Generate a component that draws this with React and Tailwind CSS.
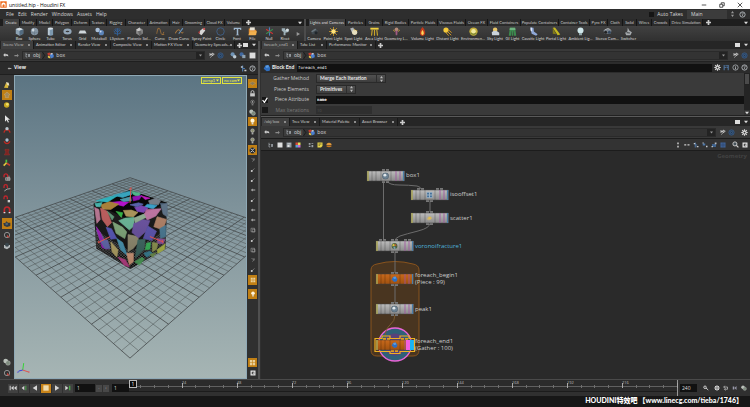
import React from "react";

const leftTabs = [
  ["Create", "w-[17px]"], ["Modify", "w-[17px]"], ["Model", "w-[16px]"], ["Polygon", "w-[19px]"],
  ["Deform", "w-[18px]"], ["Texture", "w-[17px]"], ["Rigging", "w-[19px]"], ["Character", "w-[22px]"],
  ["Animation", "w-[22px]"], ["Hair", "w-[13px]"], ["Grooming", "w-[22px]"], ["Cloud FX", "w-[20px]"], ["Volume", "w-[18px]"],
];
const rightTabs = [
  ["Lights and Cameras", "w-[37px]"], ["Particles", "w-[20px]"], ["Grains", "w-[17px]"], ["Rigid Bodies", "w-[26px]"],
  ["Particle Fluids", "w-[29px]"], ["Viscous Fluids", "w-[28px]"], ["Ocean FX", "w-[22px]"], ["Fluid Containers", "w-[33px]"],
  ["Populate Containers", "w-[38px]"], ["Container Tools", "w-[31px]"], ["Pyro FX", "w-[18px]"], ["Cloth", "w-[15px]"],
  ["Solid", "w-[14px]"], ["Wires", "w-[15px]"], ["Crowds", "w-[18px]"], ["Drive Simulation", "w-[33px]"],
];
const leftTools = [
  ["Box", "w-[16px]", "box"], ["Sphere", "w-[15px]", "sphere"], ["Tube", "w-[17px]", "tube"], ["Torus", "w-[16px]", "torus"],
  ["Grid", "w-[15px]", "plane"], ["Metaball", "w-[18px]", "meta"], ["LSystem", "w-[18px]", "lsys"], ["Platonic Sol...", "w-[26px]", "platonic"],
  ["Curve", "w-[16px]", "curve"], ["Draw Curve", "w-[22px]", "draw"], ["Spray Paint", "w-[23px]", "spray"], ["Circle", "w-[15px]", "circle"],
  ["Font", "w-[18px]", "font"], ["File", "w-[13px]", "file"], ["Null", "w-[20px]", "nul"], ["Rivet", "w-[12px]", "rivet"],
];
const rightTools = [
  ["Camera", "w-[16px]", "camera"], ["Point Light", "w-[22px]", "sun"], ["Spot Light", "w-[19px]", "spot"], ["Area Light", "w-[22px]", "area"],
  ["Geometry L...", "w-[22px]", "geo"], ["Volume Light", "w-[31px]", "volume"], ["Distant Light", "w-[19px]", "distant"],
  ["Environmen...", "w-[32px]", "env"], ["Sky Light", "w-[12px]", "sky"], ["GI Light", "w-[23px]", "gi"], ["Caustic Light", "w-[18px]", "caustic"],
  ["Portal Light", "w-[28px]", "portal"], ["Ambient Lig...", "w-[21px]", "ambient"], ["Stereo Cam...", "w-[32px]", "stereo"], ["Switcher", "w-[11px]", "switcher"],
];

const art = {
  box: <><path d="M2 5l10-3 10 4v12l-10 5L2 18z" fill="#8da3b5" /><path d="M2 5l10-3 10 4-10 4z" fill="#d5dde3" /><path d="M12 10l10-4v12l-10 5z" fill="#536b80" /></>,
  sphere: <><circle cx="12" cy="12" r="10" fill="#8595a3" /><circle cx="9" cy="8" r="4" fill="#cfd8df" /><path d="M3 14q9 5 18 0M12 2v20" stroke="#5a6b7a" fill="none" /></>,
  ballN: <><circle cx="12" cy="12" r="11" fill="#6d8394" stroke="#4f5f6b" strokeWidth="2" /><circle cx="10" cy="9" r="5" fill="#dfe6ea" /></>,
  iso: <><path d="M2 2h20v20H2z" fill="#9eb4c6" /><path d="M4 4h6v6H4zM14 4h6v6h-6zM4 14h6v6H4zM14 14h6v6h-6z" fill="#3e6c96" /></>,
  scat: <><path d="M2 15l6-8 7-1 7 6-7 7-8 1z" fill="#c5b07a" /><path d="M8 10l7-1 3 4-8 2z" fill="#e8c33c" /></>,
  frac: <><circle cx="12" cy="12" r="10" fill="#47603e" /><path d="M4 8l7-5 2 8-7 3z" fill="#d8c046" /><path d="M13 4l7 5-6 4z" fill="#c5582f" /><path d="M8 15l6-1 2 7-6 1z" fill="#7aa0b4" /></>,
  tube: <><path d="M5 4h14v17q-7 4-14 0z" fill="#7d98ae" /><path d="M5 4h5v18l-5-1z" fill="#b9c7d2" /><ellipse cx="12" cy="4" rx="7" ry="3" fill="#d8e0e6" /></>,
  torus: <ellipse cx="12" cy="12" rx="8" ry="5" fill="none" stroke="#93a6b8" strokeWidth="6" />,
  plane: <path d="M5 9h14l4 8H1z" fill="#cfd6da" />,
  meta: <><circle cx="7" cy="8" r="6" fill="#a9bfd8" /><circle cx="17" cy="15" r="7" fill="#5c83b8" /><circle cx="15" cy="12" r="2.500" fill="#c9d9ee" /></>,
  lsys: <path d="M12 23V3M12 14L4 7M12 14l8-7M12 19l-9-3M12 19l9-3M8 10V3M16 10V3M6 15l-4-5M18 15l4-5" stroke="#2f67a8" strokeWidth="2" fill="none" />,
  platonic: <><path d="M12 1l9 6v10l-9 6-9-6V7z" fill="#898989" /><path d="M12 1l4 8-8 2-5-4z" fill="#c9c9c9" /><path d="M8 11l8-2 2 9-6 5z" fill="#666" /></>,
  curve: <path d="M2 18C5-2 10 1 12 11s5 14 9 2M3 6l4-2M17 20h5" stroke="#b0793a" strokeWidth="2" fill="none" />,
  draw: <><path d="M1 17C6 5 11 6 14 11s5 7 9 2" stroke="#c08540" strokeWidth="2.500" fill="none" /><path d="M10 18L21 3" stroke="#6793bb" strokeWidth="3" /></>,
  spray: <><path d="M8 10l8-7 6 6-10 13-6-4z" fill="#d6d6d6" /><path d="M8 10l-5 4 3 5z" fill="#b33" /><circle cx="19" cy="5" r="3" fill="#c55" /></>,
  circle: <circle cx="12" cy="12" r="10" fill="none" stroke="#3f5f86" strokeWidth="2.500" />,
  font: <path d="M2 2h20v6h-2l-2-3h-4v15l3 2H7l3-2V5H6L4 8H2z" fill="#9fb8d0" />,
  file: <><path d="M2 4h9l2 3h9v14H2z" fill="#e28a2a" /><path d="M5 1h13v8H5z" fill="#e9e4d8" /><path d="M5 11h19l-4 11H1z" fill="#f2b04f" /></>,
  nul: <><path d="M12 1v22" stroke="#4c7fc0" strokeWidth="3" /><path d="M3 6l18 12" stroke="#c33" strokeWidth="3" /><path d="M21 6L3 18" stroke="#3a8a50" strokeWidth="3" /></>,
  rivet: <><path d="M2 3h9v5l9-3v8l-8 2v7H7v-9l-5-3z" fill="#9db0b8" /><circle cx="17" cy="8" r="4" fill="#d3dcdf" /></>,
  camera: <><path d="M3 11l11-7 8 6-7 9H5z" fill="#414a50" /><path d="M3 11l11-7 3 3-11 7z" fill="#6a767e" /><circle cx="16" cy="15" r="4" fill="#20262b" /></>,
  sun: <><path d="M12 0v24M0 12h24M3 3l18 18M21 3L3 21" stroke="#d9a323" strokeWidth="2" /><circle cx="12" cy="12" r="6" fill="#ffe37a" /></>,
  spot: <><path d="M3 4l8-3 5 9-8 5z" fill="#aeb4b8" /><circle cx="15" cy="14" r="7" fill="#e7dfc0" /><path d="M15 5v4M22 8l-3 3" stroke="#e0b030" strokeWidth="2" /></>,
  area: <><path d="M1 2h22v5H1z" fill="#f0d040" /><path d="M6 7L4 23M18 7l2 16M12 7v16" stroke="#c9a52a" strokeWidth="3" /></>,
  geo: <><circle cx="12" cy="6" r="5" fill="#b58b78" /><path d="M9 10h6l-1 12h-4z" fill="#a05a80" /><path d="M3 8l5 4M21 8l-5 4" stroke="#e3b23a" strokeWidth="2" /></>,
  volume: <><path d="M12 0c8 8 11 22 0 24C1 22 4 9 12 0z" fill="#c33a1b" /><path d="M12 8c4 5 5 12 0 13-5-1-4-8 0-13z" fill="#ffd75a" /></>,
  distant: <><circle cx="8" cy="8" r="7" fill="#f5c93a" /><path d="M12 12l10 10M15 8l8 7M8 15l7 8" stroke="#d99b20" strokeWidth="2.500" /></>,
  env: <><circle cx="12" cy="12" r="11" fill="#c7b13c" /><circle cx="12" cy="11" r="6" fill="#efe9a0" /><path d="M4 16q8 7 16 0" stroke="#7c8a3a" strokeWidth="3" fill="none" /></>,
  sky: <><circle cx="11" cy="7" r="6" fill="#e9c86a" /><path d="M2 14q9-8 20 1v7H3z" fill="#cbd3da" /></>,
  gi: <><path d="M5 2h14l3 21h-6l-1-12h-1v12h-4V11H9L8 23H2z" fill="#3c8a4e" /><path d="M5 2h14l1 6H4z" fill="#6fb27f" /></>,
  caustic: <><path d="M4 1l8 1 1 10 10 7-4 4-12-5z" fill="#8fa8d8" /><path d="M4 1l4 1v10l-4-3z" fill="#dce6f7" /></>,
  portal: <><path d="M2 2l6-1 14 19-7 2z" fill="#c4b820" /><path d="M2 2v16l9 1z" fill="#807a1c" /></>,
  ambient: <><circle cx="12" cy="9" r="8" fill="#cfe6ea" /><path d="M8 16h8v6H8z" fill="#8fa5a8" /></>,
  stereo: <><path d="M1 9l12-5 10 5-3 9H4z" fill="#77808a" /><circle cx="7" cy="14" r="4" fill="#222" /><circle cx="17" cy="14" r="4" fill="#32475e" /><path d="M4 8l9-4 7 3" stroke="#ccc" strokeWidth="2" fill="none" /></>,
  switcher: <><path d="M10 1l4 8 7 5-4 8H6l-3-7 6-3z" fill="#a9adb0" /><path d="M7 15l9 1" stroke="#4b4f52" strokeWidth="3" /></>,
  lockY: <><path d="M3 20l6-14 8 3-2 12z" fill="#d8b63a" /><path d="M9 3l8 2 2 9-7-3z" fill="#e9e0bd" /></>,
  view: <path d="M12 3l9 8-4 2v7H7v-7l-4-2z" fill="#a58a5c" stroke="#ddc08a" />,
  gem: <><circle cx="11" cy="12" r="8" fill="#c9a921" /><circle cx="13" cy="10" r="4" fill="#efe06c" /></>,
  arrow: <path d="M6 1v19l5-5 4 8 3-2-4-7h7z" fill="#e5e5e5" />,
  small: <path d="M3 12l8-6v4h10v4H11v4z" fill="#aaa" />,
  handR: <><path d="M3 20c2-9 5-9 9-9s7 0 9 9" stroke="#bf2a22" strokeWidth="4" fill="none" /><circle cx="12" cy="8" r="5" fill="#b9c5cc" /></>,
  handB: <><path d="M3 13q9 14 18 0" stroke="#bf2a22" strokeWidth="4" fill="none" /><circle cx="12" cy="9" r="5" fill="#a9bdd0" /></>,
  rig: <path d="M6 4h12v5l-3 2 5 10H4l5-10-3-2z" fill="#7c2522" stroke="#b03a34" />,
  axis: <><path d="M10 12V2" stroke="#4ac240" strokeWidth="5" /><path d="M10 12l11 7" stroke="#c93d30" strokeWidth="5" /><path d="M10 12l-8 8" stroke="#e2c93f" strokeWidth="5" /></>,
  magnet: <><path d="M4 21V11a8 8 0 0116 0v10" fill="none" stroke="#c1262c" strokeWidth="5" /><path d="M2 18h5v4H2zM17 18h5v4h-5z" fill="#ddd" /></>,
  magGrid: <><path d="M3 13V8a5 5 0 0111 0v5" fill="none" stroke="#c1262c" strokeWidth="4" /><path d="M8 14h13v8H8zM14 14v8M8 18h13M18 8v14" stroke="#bbb" strokeWidth="2" fill="none" /></>,
  magLine: <><path d="M3 12V7a5 5 0 0110 0v5" fill="none" stroke="#c1262c" strokeWidth="4" /><path d="M4 21q8-8 18-7" stroke="#ddd" strokeWidth="2" fill="none" /></>,
  magPt: <><path d="M3 13V8a5 5 0 0110 0v5" fill="none" stroke="#c1262c" strokeWidth="4" /><path d="M14 15h7v7h-7z" fill="#ccc" /></>,
  cam: <><path d="M1 9h6l3-5 5 4h7v10l-10 3-9-4z" fill="#2e3b45" /><circle cx="11" cy="12" r="4" fill="#53656f" /></>,
  ring: <><circle cx="12" cy="12" r="8" fill="none" stroke="#8d8d8d" strokeWidth="3" /><path d="M13 11l8 10-10-4z" fill="#c04038" /></>,
  cloud: <><path d="M3 9h18v7l-9 6-9-4z" fill="#b3b8ba" /><circle cx="12" cy="8" r="6" fill="#3a464c" /></>,
  flat: <path d="M1 11l11-5 11 5-11 7z" fill="#8c7a55" stroke="#e0b060" />,
  lock: <><path d="M4 11h16v11H4z" fill="#c8c8c8" /><path d="M7 11V7a5 5 0 0110 0v4" fill="none" stroke="#c8c8c8" strokeWidth="3" /></>,
  spark: <><circle cx="12" cy="10" r="6" fill="none" stroke="#999" strokeWidth="2" /><circle cx="12" cy="10" r="2" fill="#ddd" /><path d="M9 17h6v5H9z" fill="#777" /></>,
  balls: <><circle cx="8" cy="9" r="7" fill="#b9c0b9" /><circle cx="15" cy="15" r="7" fill="#7d8a7d" stroke="#ddd" /></>,
  bulb: <><circle cx="12" cy="9" r="7" fill="#fff6dd" /><path d="M9 16h6v6H9z" fill="#ddd" /></>,
  bulbD: <><circle cx="12" cy="9" r="6" fill="#8c8f70" stroke="#ccc" strokeWidth="2" /><path d="M9 16h6v6H9z" fill="#aaa" /></>,
  ballB: <><circle cx="12" cy="12" r="10" fill="#23282c" /><path d="M5 6l7 4 7-5M5 18l7-5 7 6" stroke="#d8d8d8" strokeWidth="3" fill="none" /></>,
  tick: <path d="M6 6l12 5-9 7M16 4v6" stroke="#aaa" strokeWidth="2" fill="none" />,
  dotp: <><path d="M5 18L18 6" stroke="#999" strokeWidth="2.500" /><circle cx="7" cy="16" r="4" fill="#ccc" /></>,
  sheet: <path d="M4 5h14v14H4zM9 9h11v11H9z" stroke="#aaa" strokeWidth="2" fill="none" />,
  hash: <path d="M3 3h8v8H3zM13 3h8v8h-8zM3 13h8v8H3zM13 13h8v8h-8z" fill="#e9d09a" />,
  win: <><path d="M2 2h20v20H2z" fill="#e5e5e5" /><path d="M7 7h10v10H7z" fill="#333" /><path d="M11 10h6v5h-6z" fill="#ddd" /></>,
  tree: <path d="M4 3v17h5M4 10h5M14 8v12M14 12h6M18 8v12" stroke="#aeb4ba" strokeWidth="2.500" fill="none" />,
  pinned: <path d="M4 4v12M4 10h9M12 4l9 5-9 6zM10 17l-4 5" stroke="#ddd" strokeWidth="3" fill="none" />,
  target: <><circle cx="12" cy="12" r="9" fill="#22364f" stroke="#3b5f8a" strokeWidth="3" /><circle cx="12" cy="12" r="4" fill="none" stroke="#5079a8" strokeWidth="2" /></>,
  globes: <><circle cx="9" cy="8" r="7" fill="#6f93b5" /><circle cx="16" cy="16" r="6" fill="#bcc9d2" /></>,
  globes2: <><circle cx="9" cy="8" r="7" fill="#4169a0" /><path d="M11 10h11v11H11z" fill="#8da0b0" /></>,
  white: <path d="M2 2h20v20H2z" fill="#dedede" />,
  help: <><circle cx="12" cy="12" r="9" fill="none" stroke="#b9bec2" strokeWidth="3" /><path d="M9 9q3-4 6 0l-3 4v4" stroke="#b9bec2" strokeWidth="2.500" fill="none" /></>,
  info: <><circle cx="12" cy="12" r="9" fill="none" stroke="#b9bec2" strokeWidth="2.500" /><path d="M12 7v2M12 11v7" stroke="#b9bec2" strokeWidth="3" /></>,
  gear: <><path d="M12 1v22M1 12h22M4 4l16 16M20 4L4 20" stroke="#d5d5d5" strokeWidth="4" /><circle cx="12" cy="12" r="7" fill="#d5d5d5" /><circle cx="12" cy="12" r="3" fill="#333" /></>,
  fig: <path d="M4 3v18M4 12h6M18 3v18M18 12h-6M8 6h8" stroke="#4d6f96" strokeWidth="4" fill="none" />,
  boxes: <><path d="M1 4l8-2 3 3v6l-8 2z" fill="#c33b2e" /><path d="M9 9l10-3 4 4v8l-10 4z" fill="#4a7fd0" /><path d="M3 13l8 2v7l-8-3z" fill="#e3c94b" /><path d="M12 5l6-2 2 4-7 2z" fill="#e8e8e8" /></>,
  hda: <><path d="M2 14l5-9 9-2 6 8-2 9-9 2z" fill="#2f6fc0" /><path d="M7 5l9-2 2 7-8 2z" fill="#5b9be0" /></>,
  pane: <><path d="M2 2h20v20H2z" fill="#8e979e" /><path d="M6 6h12v3H6zM6 12h8v8H6z" fill="#e3e3e3" /></>,
  rgb: <><path d="M2 2h10v10H2z" fill="#d54a3a" /><path d="M12 2h10v10H12z" fill="#e5e05a" /><path d="M2 12h10v10H2z" fill="#58a0d8" /><path d="M12 12h10v10H12z" fill="#c86bd0" /></>,
  note: <><path d="M2 2h20v14l-6 6H2z" fill="#e8d44a" /><path d="M6 8h12M6 13h6" stroke="#5a5020" strokeWidth="3" /></>,
  burger: <><path d="M2 8q10-10 20 0v4H2z" fill="#e39a3a" /><path d="M2 14h20v4q-10 5-20 0z" fill="#c97a20" /></>,
  four: <path d="M3 4h7v7H3zM14 4h7v3h-7zM14 12h7v9h-7zM3 15h7v5H3z" fill="#9aa0a5" />,
  vd: <path d="M9 2h6v7H9zM9 15h6v7H9z" fill="#ccc" />,
  hd: <path d="M1 9h8v5H1zM14 9h8v5h-8z" fill="#ccc" />,
  net1: <><path d="M9 2v20M9 12h8" stroke="#4d77a8" strokeWidth="4" fill="none" /><path d="M3 4h6v5H3zM15 16h7v5h-7z" fill="#c5ccd2" /></>,
  net2: <><path d="M3 6h10v8H3z" fill="#4d77a8" /><path d="M2 2h5v4H2zM16 15h6v6h-6z" fill="#c5ccd2" /></>,
  net3: <><path d="M4 8h16v12H4z" fill="#3f628c" /><path d="M15 2h7v7h-7zM2 16h6v5H2z" fill="#b5bcc2" /></>,
  blueGrid: <><path d="M2 2h20v20H2z" fill="#4469a0" /><path d="M2 9h20M2 15h20M9 2v20M15 2v20" stroke="#263b5a" strokeWidth="1.500" /></>,
  mag: <><circle cx="10" cy="10" r="7" fill="#46525a" stroke="#d8d8d8" strokeWidth="3" /><path d="M15 15l7 7" stroke="#d8d8d8" strokeWidth="4" /></>,
  back: <path d="M1 12l8-8v5h8q5 2 4 9-3-4-12-3v5z" fill="#cfcfcf" />,
  fwd: <path d="M23 12l-8-8v5H2v6h13v5z" fill="#8b8b8b" />,
  first: <path d="M2 5h3v14H2zM14 5v14l-8-7zM23 5v14l-8-7z" fill="#d5d5d5" />,
  prevK: <><path d="M13 5v14l-8-7z" fill="#d5d5d5" /><path d="M16 5h3v14h-3z" fill="#49a64a" /></>,
  playB: <path d="M18 4v16L5 12z" fill="#d5d5d5" />,
  stop: <path d="M4 4h16v16H4z" fill="#f0dcae" />,
  play: <path d="M6 4v16l13-8z" fill="#d5d5d5" />,
  last: <><path d="M4 5v14l9-7z" fill="#d5d5d5" /><path d="M15 5h4v14h-4z" fill="#49a64a" /></>,
  key: <><circle cx="8" cy="9" r="5" fill="none" stroke="#ccc" strokeWidth="4" /><path d="M12 12l9 8" stroke="#ccc" strokeWidth="4" /></>,
  loop: <path d="M3 8h15v9H6M7 3L3 8l4 5M10 13l-4 4 4 5" stroke="#bbb" strokeWidth="3" fill="none" />,
  speaker: <><path d="M3 6h6v12H3zM10 12l8-8v16z" fill="#99a" /></>,
  houdini: <><path d="M1 1h22v22H1z" fill="#ee6a1c" /><path d="M5 20V9q7-7 14 0v11h-4q3-9-3-9-5 0-3 9z" fill="#fff" /></>,
};

function Glyph({ n, s = "size-[8px]" }) {
  return <svg viewBox="0 0 24 24" aria-hidden="true" className={`${s} block shrink-0`}>{art[n]}</svg>;
}
function IconBtn({ n, label, w = "w-[9px]", on = false, h = "h-[9px]", s }) {
  return (
    <button aria-label={label || n} className={`${w} ${h} flex shrink-0 items-center justify-center ${on ? "bg-[#c07f14]" : ""}`}>
      <Glyph n={n} s={s} />
    </button>
  );
}
const Down = () => <svg viewBox="0 0 6 6" className="block size-[4px] shrink-0" aria-hidden="true"><path d="M0 1h6L3 5z" fill="#ddd" /></svg>;
const Plus = () => <svg viewBox="0 0 6 6" className="block size-[5px] shrink-0" aria-hidden="true"><path d="M2 0h2v2h2v2H4v2H2V4H0V2h2z" fill="#ccc" /></svg>;

function Shelf({ tabs, tools, className, arrow }) {
  return (
    <section className={`flex flex-col overflow-hidden font-['Lato',sans-serif] ${className}`}>
      <div className="flex h-[7px] items-stretch bg-[#1e1e1e] pl-[3px] pr-[2px]">
        {tabs.map(([t, w], i) => (
          <button key={t} className={`${w} flex shrink-0 items-center justify-center whitespace-nowrap border-r border-[#151515] text-[4px] leading-[6px] ${i === 0 ? "bg-[#414141] text-[#ddd]" : "bg-[#2b2b2b] text-[#c8c8c8]"}`}>{t}</button>
        ))}
        <button aria-label="Add shelf" className="flex w-[10px] items-center justify-center"><Plus /></button>
        <button aria-label="Shelf menu" className="ml-auto flex w-[5px] items-center justify-center"><Down /></button>
      </div>
      <div className={`flex flex-1 bg-linear-to-b from-[#414141] to-[#303030] ${arrow ? "pl-[11px]" : ""}`}>
        {tools.map(([t, w, n]) => (
          <button key={t} className={`${w} flex shrink-0 flex-col items-center whitespace-nowrap pt-px text-[4px] leading-[5px] text-[#d8d8d8]`}>
            <Glyph n={n} s="size-[9px]" />{t}
          </button>
        ))}
        {arrow && <button aria-label="More tools" className="flex w-[14px] items-center justify-center"><svg viewBox="0 0 6 6" className="size-[4px]"><path d="M1 0l5 3-5 3z" fill="#999" /></svg></button>}
      </div>
    </section>
  );
}

function PaneTabs({ tabs }) {
  return (
    <div className="flex h-[8px] shrink-0 bg-[#262626] pl-px font-['Lato',sans-serif]">
      {tabs.map(([t, w], i) => (
        <button key={t} className={`${w} flex shrink-0 items-center justify-between whitespace-nowrap border-r border-[#191919] pl-[2px] pr-[3px] text-[4px] leading-[6px] ${i === 0 ? "bg-[#404040] text-[#b8b8b8]" : "bg-[#2a2a2a] text-[#d2d2d2]"}`}>
          {t}<span className="size-[2px] shrink-0 bg-[#8c8c8c]" />
        </button>
      ))}
      <button aria-label="New tab" className="flex w-[9px] items-center justify-center"><Plus /></button>
      <div className="ml-auto flex items-center gap-[4px] pr-[2px]">
        <button aria-label="Maximize pane" className="h-[4px] w-[5px] bg-[#ddd]" />
        <button aria-label="Pane menu" className="flex"><Down /></button>
      </div>
    </div>
  );
}

function PathBar({ children }) {
  return (
    <div className="flex h-[12px] shrink-0 items-center bg-[#393939] pl-px text-[5px] leading-[7px] text-[#d8d8d8]">
      <IconBtn n="back" label="Back" w="w-[10px]" s="size-[6px]" />
      <IconBtn n="fwd" label="Forward" w="w-[10px]" s="size-[5px]" />
      <div className="ml-px flex h-[9px] min-w-0 flex-1 items-center border border-[#2a2a2a] bg-[#333]">
        <button className="flex h-full items-center gap-[2px] bg-[#3d3d3d] pl-[2px] pr-[2px]"><Glyph n="tree" s="size-[6px]" />obj</button>
        <svg viewBox="0 0 4 9" className="h-[7px] w-[4px]" aria-hidden="true"><path d="M0 0l3 4.500L0 9" fill="none" stroke="#161616" /></svg>
        <button className="flex items-center gap-[2px] pl-px"><Glyph n="boxes" s="size-[7px]" />box</button>
        <button aria-label="Path history" className="ml-auto flex h-full w-[8px] items-center justify-center bg-[#232323]"><svg viewBox="0 0 6 6" className="size-[3px]"><path d="M0 1h6L3 5z" fill="#999" /></svg></button>
      </div>
      <div className="flex shrink-0 items-center pl-[2px] pr-px">{children}</div>
    </div>
  );
}

const pieces = [
  ["#2fb0ba", "78,92 126,78 142,77 112,96"], ["#38a4bd", "130,75 182,62 186,72 158,82"], ["#4fb58a", "184,62 212,70 206,80 190,73"],
  ["#b012c8", "118,97 150,94 176,96 160,108"], ["#a8803a", "92,104 118,95 146,102 122,118 97,117"], ["#43b0a8", "74,100 96,97 90,110 78,109"],
  ["#4a98a8", "150,88 182,80 184,92 160,94"], ["#8f12b2", "188,80 216,76 208,88 190,92"], ["#c01cc0", "214,77 240,84 226,88"], ["#747c86", "236,92 258,84 272,92 266,104 240,102"],
  ["#3a9fc8", "232,102 262,106 250,116 224,110"], ["#7a45b0", "194,112 214,106 234,114 222,127 202,124"], ["#5862a8", "180,104 206,98 220,102 200,110"],
  ["#a8925a", "160,121 184,120 204,127 190,141 168,138"], ["#35b045", "138,124 158,128 154,142"], ["#b8689a", "230,118 274,116 258,138 232,150 222,134"],
  ["#50667c", "272,99 292,100 292,140 280,132"], ["#b06a88", "73,112 86,118 90,148 80,160"], ["#b55050", "91,114 112,124 124,158 112,170 96,148"],
  ["#54906c", "112,124 132,140 126,150"], ["#5fae8f", "146,152 166,144 192,142 192,168 178,180"], ["#759e70", "128,156 158,172 170,186 164,206 138,190"],
  ["#4a4ab0", "108,172 124,176 140,206 122,208"], ["#6c50a0", "78,180 90,186 104,212 92,216"], ["#9412b2", "78,170 88,184 104,224 114,238 96,234"],
  ["#5a60a8", "90,212 112,210 120,236 104,236"], ["#3f8fae", "140,206 158,218 172,258 152,240"], ["#b0a060", "122,216 144,240 140,262 126,246"],
  ["#8a8468", "174,194 204,200 206,216 190,236 174,246"], ["#5f4598", "192,160 218,148 240,152 228,184 206,204 186,188"], ["#87a588", "192,144 222,132 228,142 196,158"],
  ["#a8765a", "262,140 290,148 280,180 252,170"], ["#5048a8", "234,168 260,184 246,212 220,206"], ["#3d6f8a", "270,176 288,166 288,200 272,206"],
  ["#35605a", "204,210 226,208 222,240 196,264"], ["#2fb050", "230,220 242,218 240,238 226,240"], ["#8a9048", "248,218 264,220 260,238 248,246"],
  ["#a9b53f", "262,240 286,222 284,238 264,250"], ["#844792", "262,206 286,208 280,222 264,220"], ["#d59a7a", "170,250 190,250 190,276 178,286"],
  ["#c0408a", "144,262 166,270 178,292 162,286"], ["#4c9f59", "194,276 216,262 224,268 208,286"], ["#337c92", "222,250 240,244 250,252 230,262"], ["#6c8c48", "240,254 260,248 248,262"],
];

function Viewport() {
  const N = 30, g = 0.775, b = 46.6, a = 262.6;
  const P = (u, v) => {
    const w = 1 + g * (u + v);
    return `${(130 + (a * (u - v)) / w).toFixed(2)} ${((359 + b * (u + v)) / w).toFixed(2)}`;
  };
  const lines = (major) => Array.from({ length: N + 1 }, (_, i) => i).filter((i) => (i % 5 === 0) === major)
    .map((i) => `M${P(i / N, 0)}L${P(i / N, 1)}M${P(0, i / N)}L${P(1, i / N)}`).join("");
  return (
    <div className="relative min-w-0 flex-1 overflow-hidden border border-[#8fa9b6] bg-linear-to-b from-[#5c7583] via-[#84979e] to-[#a6b5b4]">
      <svg viewBox="14 75 233 304" preserveAspectRatio="xMidYMid slice" className="absolute inset-0 h-full w-full" aria-label="Fractured cube on the ground grid">
        <path d={lines(false)} stroke="#4b5152" strokeWidth="0.600" fill="none" opacity="0.850" />
        <path d={lines(true)} stroke="#434748" strokeWidth="0.800" fill="none" />
        <g transform="translate(70 170) scale(.3333)">
          <defs>
            <linearGradient id="shade" x1="0" x2="0" y1="0" y2="1"><stop offset="0" stopColor="#fff" stopOpacity=".08" /><stop offset="1" stopColor="#000" stopOpacity=".2" /></linearGradient>
            <pattern id="mesh" width="9" height="8" patternUnits="userSpaceOnUse"><path d="M0 0l9 8M9 0L0 8" stroke="#8b8b8b" strokeWidth="1.200" /></pattern>
          </defs>
          <path d="M70 100L180 59L292 98L287 236L181 298L78 236Z" fill="#070707" />
          <path d="M76 180L181 245L288 180L287 236L181 298L78 236Z" fill="url(#mesh)" />
          {pieces.map(([c, p]) => <polygon key={p} points={p} fill={c} stroke={c} strokeWidth="2" strokeLinejoin="round" />)}
          <path d="M70 100L180 150L292 98L287 236L181 298L78 236Z" fill="url(#shade)" />
          <path d="M180 98L183 52l-5 6M84 218l36-18M240 200l40 16M84 214l3 6M278 211l2 8" stroke="#e0524c" strokeWidth="3" fill="none" />
        </g>
        <path d="M22 371l1-7" stroke="#35d335" /><path d="M22 371l6 2" stroke="#e05050" /><path d="M22 371l-4 1" stroke="#3b3be0" />
      </svg>
      <div className="absolute right-[4px] top-px flex gap-px">
        {["persp1", "no cam"].map((t) => (
          <button key={t} className="flex h-[7px] w-[20px] items-center justify-between whitespace-nowrap border border-[#e2e23a] px-px font-['Lato',sans-serif] text-[4px] leading-[5px] text-[#f4f43a]">{t}
            <svg viewBox="0 0 6 6" className="size-[3px]" aria-hidden="true"><path d="M0 1h6L3 5z" fill="#f4f43a" /></svg></button>
        ))}
      </div>
      <span className="absolute bottom-[4px] left-[2px] text-[4px] leading-[5px] text-[#3030d8]">z</span>
      <span className="absolute bottom-[4px] left-[13px] text-[4px] leading-[5px] text-[#e05050]">x</span>
    </div>
  );
}

function Spin({ options, w, id }) {
  return (
    <div className={`${w} flex h-[9px] items-center border border-[#2a2a2a] bg-linear-to-b from-[#515151] to-[#3d3d3d]`}>
      <select id={id} className="min-w-0 flex-1 appearance-none bg-transparent pl-[3px] font-['Lato',sans-serif] text-[5px] font-bold leading-[7px] text-[#e6e6e6]">
        {options.map((o) => <option key={o}>{o}</option>)}
      </select>
      <span className="flex h-full w-[9px] items-center justify-center border-l border-[#2d2d2d]">
        <svg viewBox="0 0 4 8" className="h-[6px] w-[3px]" aria-hidden="true"><path d="M0 3l2-3 2 3zM0 5h4L2 8z" fill="#bbb" /></svg>
      </span>
    </div>
  );
}

const labelCls = "whitespace-nowrap text-right text-[5px] leading-[9px]";

function Params() {
  return (
    <div className="flex shrink-0 flex-col bg-[#3a3a3a]">
      <div className="flex h-[11px] items-center bg-[#2c2c2c] pl-[2px] pr-px">
        <Glyph n="hda" s="size-[8px]" />
        <label htmlFor="opname" className="w-[26px] whitespace-nowrap pl-px font-['Lato',sans-serif] text-[5px] font-black text-[#e6e6e6]">Block End</label>
        <input id="opname" defaultValue="foreach_end1" className="h-[8px] min-w-0 flex-1 bg-[#111] px-px font-['DejaVu_Sans_Mono',monospace] text-[4px] leading-[7px] text-[#fff]" />
        <div className="flex pl-px"><IconBtn n="gear" label="Parameter options" s="size-[7px]" /><IconBtn n="fig" label="Figures" s="size-[7px]" /><IconBtn n="info" label="Info" s="size-[7px]" /><IconBtn n="help" label="Help" s="size-[7px]" /></div>
      </div>
      <div className="flex h-[42px]">
        <div className="grid min-w-0 flex-1 grid-cols-[10px_36px_1fr] items-center gap-x-[2px] gap-y-px pt-px">
          <span /><label htmlFor="gm" className={`${labelCls} text-[#cacaca]`}>Gather Method</label>
          <div className="pl-[5px]"><Spin id="gm" w="w-[70px]" options={["Merge Each Iteration", "Feedback Each Iteration"]} /></div>
          <span /><label htmlFor="pe" className={`${labelCls} text-[#cacaca]`}>Piece Elements</label>
          <div className="pl-[5px]"><Spin id="pe" w="w-[40px]" options={["Primitives", "Points"]} /></div>
          <label className="flex pl-px"><input type="checkbox" defaultChecked aria-label="Use piece attribute" className="peer size-[6px] appearance-none bg-[#151515]" />
            <svg viewBox="0 0 10 10" className="pointer-events-none -ml-[6px] size-[6px]" aria-hidden="true"><path d="M1 5l3 4 5-8" fill="none" stroke="#fff" strokeWidth="2" /></svg></label>
          <label htmlFor="pa" className={`${labelCls} text-[#cacaca]`}>Piece Attribute</label>
          <div className="pl-[5px]"><input id="pa" defaultValue="name" className="block h-[8px] w-full bg-[#111] px-px font-['DejaVu_Sans_Mono',monospace] text-[4px] font-bold text-[#fff]" /></div>
          <label className="flex pl-px"><input type="checkbox" aria-label="Use max iterations" className="size-[6px] appearance-none bg-[#181818]" /></label>
          <label htmlFor="mi" className={`${labelCls} text-[#7a7a7a]`}>Max Iterations</label>
          <div className="flex items-center pl-[5px]"><input id="mi" disabled defaultValue="10" className="block h-[8px] w-[56px] bg-[#2f2f2f] px-px text-[4px] text-[#555]" /></div>
        </div>
        <div className="flex w-[6px] flex-col justify-between bg-[#242424]"><span className="h-[12px] border border-[#222] bg-[#4a4a4a]" /><span className="flex h-[5px] items-center justify-center bg-[#333]"><Down /></span></div>
      </div>
    </div>
  );
}

const nodes = [
  { x: 367, y: 171, n: "box1", ins: [18], icon: "ballN", lx: "left-[145px] top-[21px]" },
  { x: 411, y: 190, n: "isooffset1", ins: [9, 28], icon: "iso", lx: "left-[189px] top-[40px]" },
  { x: 411, y: 213, n: "scatter1", ins: [18], icon: "scat", lx: "left-[189px] top-[64px]" },
  { x: 376, y: 241, n: "voronoifracture1", ins: [6, 18, 31], icon: "frac", lx: "left-[154px] top-[92px]", c: "text-[#4fb4dc]" },
  { x: 376, y: 274, n: "foreach_begin1", sub: "(Piece : 99)", ins: [18], icon: "hda", o: true, lx: "left-[154px] top-[121px]" },
  { x: 376, y: 304, n: "peak1", ins: [18], icon: "ballN", lx: "left-[154px] top-[155px]" },
  { x: 376, y: 340, n: "foreach_end1", sub: "(Gather : 100)", ins: [10, 28], icon: "hda", o: true, sel: true, lx: "left-[154px] top-[187px]" },
];

function Network() {
  return (
    <div className="relative min-h-0 flex-1 overflow-hidden bg-[#2a2a2a]">
      <svg width="490" height="240" viewBox="261 151 490 240" className="absolute left-0 top-0" aria-hidden="true">
        <defs><linearGradient id="ng" x1="0" x2="0" y1="0" y2="1"><stop offset="0" stopColor="#bdbdbd" /><stop offset="1" stopColor="#8a8a8a" /></linearGradient>
          <linearGradient id="og" x1="0" x2="0" y1="0" y2="1"><stop offset="0" stopColor="#c9691b" /><stop offset="1" stopColor="#a0510f" /></linearGradient></defs>
        <path d="M371 270q0-5 6-6 18-5 36 0 6 1 6 6v80q0 6-6 6h-36q-6 0-6-6z" fill="#493520" stroke="#8a541d" />
        <circle cx="395" cy="344.500" r="16.500" fill="#2f6078" stroke="#e866d8" strokeWidth="1.300" />
        <circle cx="395" cy="344.500" r="11" fill="#58427a" />
        <g fill="none" stroke="#6c6c6c">
          <path d="M383.500 181V239M387 181q2 4 12 4t18 1q4 1 4 3M430 200v12M430 223q0 5-12 8t-18 5q-5 2-5 5M395 251v22M395 284v19" />
          <path d="M395 315q0 6-5 10t-5 14" stroke="#7b5a30" />
        </g>
        {nodes.map((k) => (
          <g key={k.n} transform={`translate(${k.x} ${k.y})`}>
            {k.ins.map((i) => <path key={i} d={`M${i - 3} -2h3v2h-3zM${i + 1} -2h3v2h-3z`} fill={k.sel ? "#e0a020" : "#777"} />)}
            <path d="M15 10h3v2h-3zM19 10h3v2h-3z" fill={k.sel ? "#e0a020" : "#777"} />
            <rect width="37.500" height="10" fill={k.o ? "url(#og)" : "url(#ng)"} stroke="#454545" strokeWidth=".5" />
            <path d="M1 0v10" stroke="#a9a455" strokeWidth="1.500" />
            <path d="M5 0v10M9 0v10M14 0v10M24 0v10" stroke="#000" strokeOpacity=".22" />
            <path d="M29 0v10M33 0v10" stroke="#a050a0" strokeWidth="1" strokeOpacity=".8" /><path d="M36.500 0v10" stroke="#4b7fa8" strokeWidth="1.200" />
            {k.sel && <><rect x="30" width="4" height="10" fill="#f45fe0" /><rect x="34" width="4.500" height="10" fill="#19b4f4" /><path d="M-1-1.500H6V-4H14V-1.500H24V-4H33V-1.500H38.500V11.500H24V13.500H14V11.500H-1z" fill="none" stroke="#f0b022" strokeWidth="1.200" /></>}
            <svg x="15" y="1.500" width="7" height="7" viewBox="0 0 24 24">{art[k.icon]}</svg>
          </g>
        ))}
      </svg>
      {nodes.map((k) => (
        <div key={k.n} className={`absolute whitespace-nowrap text-[6px] leading-[7px] ${k.lx} ${k.c || "text-[#cdcdcd]"}`}>{k.n}{k.sub && <><br />{k.sub}</>}</div>
      ))}
      <div className="absolute right-[3px] top-px text-[6px] font-bold leading-[8px] text-[#424242]">Geometry</div>
    </div>
  );
}

function Timeline() {
  const pos = (f) => `${((f - 1) / 239) * 100}%`;
  const ticks = Array.from({ length: 40 }, (_, i) => (i + 1) * 6);
  return (
    <div className="relative h-[16px] min-w-0 flex-1 border-r border-[#999] bg-[#303030]">
      <div className="h-[12px] border-b border-[#1c1c1c] bg-[#2b2b2b]" />
      <div className="absolute inset-x-0 top-[6px] h-px bg-[#606060]" />
      {ticks.map((f) => <span key={f} className={`absolute w-px ${f % 24 ? "top-[5px] h-[3px] bg-[#707070]" : "top-[3px] h-[5px] bg-[#aaa]"}`} style={{ left: pos(f) }} />)}
      {[24, 48, 72, 96, 120, 144, 168, 192, 216].map((f) => <span key={f} className="absolute top-0 text-[4px] leading-[5px] text-[#bbb]" style={{ left: pos(f) }}>{f}</span>)}
      <div className="absolute left-0 top-0 flex h-[8px] w-[8px] items-center justify-center border border-[#bbb] bg-[#0c0c0c] text-[5px] leading-[6px] text-white">1</div>
    </div>
  );
}

const Num = ({ v, label, w }) => <input aria-label={label} defaultValue={v} className={`${w} h-[8px] shrink-0 bg-[#111] px-[2px] text-[5px] leading-[8px] text-[#ddd]`} />;

const lt = [["lockY", 10], ["view", 10, 1], ["gem", 10], 4, ["arrow", 11], ["handR", 11], ["handB", 11], ["rig", 11], ["axis", 11], 3, ["magGrid", 11], ["magLine", 11], ["magPt", 11], ["magnet", 11], 3, ["cam", 11, 1], ["ring", 11], ["cloud", 11]];
const rtTop = ["*flat", "lock", "spark", "balls", "*bulb", "bulbD", "bulbD", "*ballB"];
const rt = ["tick", "dotp", "dotp", "small", "dotp", "small", "small", "sheet", "dotp", "sheet", "tick", "dotp", "*hash"];

export default function App() {
  return (
    <div className="flex h-screen min-h-[400px] w-full flex-col overflow-hidden bg-[#1b1b1b] font-['Open_Sans','Noto_Sans_CJK_SC',sans-serif] text-[#bbb]">
      <header className="flex h-[9px] shrink-0 items-center bg-white text-[5px] text-black">
        <Glyph n="houdini" s="size-[7px]" />
        <h1 className="pl-[2px] text-[5px] leading-[8px]">untitled.hip - Houdini FX</h1>
        <div className="ml-auto flex gap-[12px] pr-[7px]">
          {[["Minimize", "M1 4h6"], ["Restore", "M1 3h4v4H1zM3 3V1h4v4H5"], ["Close", "M1 1l6 6M7 1L1 7"]].map(([l, d]) => (
            <button key={l} aria-label={l}><svg viewBox="0 0 8 8" className="size-[6px]"><path d={d} stroke="#222" fill="none" /></svg></button>
          ))}
        </div>
      </header>
      <nav className="flex h-[10px] shrink-0 items-center gap-[4px] bg-[#2e2e2e] pl-[6px] pr-[3px] text-[5px] text-[#d8d8d8]">
        {["File", "Edit", "Render", "Windows", "Assets", "Help"].map((m) => <button key={m} className="leading-[8px]">{m}</button>)}
        <label className="ml-auto flex items-center gap-[3px] leading-[8px]"><input type="checkbox" className="size-[5px] appearance-none bg-[#151515]" />Auto Takes</label>
        <select aria-label="Take" className="h-[9px] w-[40px] appearance-none bg-[#3c3c3c] pl-[4px] text-[5px] leading-[8px]"><option>Main</option></select>
        <svg viewBox="0 0 4 8" className="h-[6px] w-[3px]" aria-hidden="true"><path d="M0 3l2-3 2 3zM0 5h4L2 8z" fill="#999" /></svg>
        <IconBtn n="help" label="Help" s="size-[7px]" />
      </nav>
      <div className="flex h-[22px] shrink-0">
        <Shelf tabs={leftTabs} tools={leftTools} arrow className="w-[304px] shrink-0" />
        <div className="w-[2px] shrink-0 bg-[#4c4c4c]" />
        <Shelf tabs={rightTabs} tools={rightTools} className="min-w-0 flex-1" />
      </div>
      <main className="flex min-h-0 flex-1">
        <section className="flex w-[258px] shrink-0 flex-col bg-[#303030]">
          <PaneTabs tabs={[["Scene View", "w-[33px]"], ["Animation Editor", "w-[42px]"], ["Render View", "w-[35px]"], ["Composite View", "w-[41px]"], ["Motion FX View", "w-[41px]"], ["Geometry Spreads...", "w-[42px]"]]} />
          <PathBar>
            <IconBtn n="pinned" label="Pin" s="size-[6px]" /><IconBtn n="target" label="Link" s="size-[7px]" /><span className="w-[3px]" />
            <IconBtn n="globes" label="Displays" w="w-[10px]" s="size-[7px]" /><IconBtn n="globes2" label="Render" s="size-[7px]" /><IconBtn n="white" label="Background" w="w-[10px]" s="size-[7px]" />
          </PathBar>
          <div className="flex h-[14px] shrink-0 items-center border-y border-[#1f1f1f] bg-[#2b2b2b] pl-[6px] pr-px">
            <IconBtn n="small" label="View tool" w="w-[7px]" s="size-[5px]" />
            <h2 className="pl-px text-[5px] font-bold text-[#eee]">View</h2>
            <div className="ml-auto flex"><IconBtn n="net1" label="Layout" w="w-[10px]" s="size-[7px]" /><IconBtn n="help" label="Help" s="size-[7px]" /></div>
          </div>
          <div className="flex min-h-0 flex-1">
            <div className="flex w-[14px] shrink-0 flex-col items-center bg-[#353535] pb-px pt-[5px]">
              {lt.map((t, i) => typeof t === "number"
                ? <span key={i} className="h-[3px]" />
                : <IconBtn key={i} n={t[0]} w="w-[10px]" h={t[1] === 10 ? "h-[10px]" : "h-[11px]"} on={!!t[2]} />)}
              <div className="mt-auto"><IconBtn n="balls" label="Shading" h="h-[10px]" /><IconBtn n="ring" label="Rendering" h="h-[11px]" /></div>
            </div>
            <Viewport />
            <div className="flex w-[11px] shrink-0 flex-col items-center bg-[#303030] pb-px pt-[4px]">
              {rtTop.map((t, i) => <IconBtn key={i} n={t.replace("*", "")} on={t[0] === "*"} h={i % 2 ? "h-[10px]" : "h-[9px]"} s="size-[7px]" />)}
              {rt.map((t, i) => <IconBtn key={i} n={t.replace("*", "")} on={t[0] === "*"} h="h-[10px]" s="size-[6px]" />)}
              <span className="h-[4px]" /><IconBtn n="bulb" label="Lighting" on h="h-[10px]" s="size-[6px]" />
              <div className="mt-auto"><IconBtn n="hash" label="Grid" on h="h-[9px]" s="size-[7px]" /><IconBtn n="win" label="Snapshot" h="h-[11px]" s="size-[6px]" /></div>
            </div>
          </div>
        </section>
        <div className="w-[2px] shrink-0 bg-[#505050]" />
        <section className="flex min-w-0 flex-1 flex-col bg-[#303030] pl-px">
          <PaneTabs tabs={[["foreach_end1", "w-[36px]"], ["Take List", "w-[29px]"], ["Performance Monitor", "w-[49px]"]]} />
          <PathBar><span className="w-px" /><IconBtn n="pinned" label="Pin" s="size-[6px]" /><IconBtn n="target" label="Link" s="size-[7px]" /></PathBar>
          <div className="h-px bg-[#222]" />
          <Params />
          <div className="h-[3px] shrink-0 border-y border-[#222] bg-[#5a5a5a]" />
          <PaneTabs tabs={[["/obj/box", "w-[28px]"], ["Tree View", "w-[30px]"], ["Material Palette", "w-[40px]"], ["Asset Browser", "w-[38px]"]]} />
          <PathBar><IconBtn n="pinned" label="Pin" s="size-[6px]" /><IconBtn n="target" label="Link" s="size-[7px]" /><span className="w-[4px]" /><IconBtn n="gear" label="Options" s="size-[7px]" /></PathBar>
          <div className="flex h-[13px] shrink-0 items-center border-y border-[#1c1c1c] bg-[#333] pl-[5px] pr-px">
            {["tree", "white", "pane", "rgb"].map((n) => <IconBtn key={n} n={n} s="size-[6px]" />)}
            <span className="w-[4px]" />
            {["four", "note", "burger"].map((n) => <IconBtn key={n} n={n} s="size-[6px]" />)}
            <div className="ml-auto flex">
              {["vd", "hd", "net1", "net2", "net3", "blueGrid"].map((n) => <IconBtn key={n} n={n} s="size-[6px]" />)}
              <span className="w-[4px]" /><IconBtn n="mag" label="Find" s="size-[7px]" /><IconBtn n="win" label="Overview" s="size-[6px]" />
            </div>
          </div>
          <Network />
        </section>
      </main>
      <footer className="shrink-0">
        <div className="flex h-[17px] items-center border-t border-[#4a4a4a] bg-[#303030] pl-[8px] pr-[2px]">
          {["first", "prevK", "playB", "stop", "play", "last"].map((n) => (
            <button key={n} aria-label={n} className={`mr-px flex h-[9px] w-[10px] shrink-0 items-center justify-center ${n === "stop" ? "bg-[#c8841a]" : "bg-[#414141]"}`}><Glyph n={n} s="size-[8px]" /></button>
          ))}
          <span className="w-px" /><Num v="1" label="Current frame" w="w-[20px]" />
          {["-", "+"].map((s) => <button key={s} aria-label={s === "-" ? "Previous" : "Next"} className="ml-px flex h-[7px] w-[6px] shrink-0 items-center justify-center bg-[#484848] text-[4px] leading-none">{s}</button>)}
          <span className="w-[3px] shrink-0" /><Num v="1" label="Start frame" w="w-[17px]" />
          <Timeline />
          <span className="w-[2px] shrink-0" /><Num v="240" label="End frame" w="w-[17px]" />
          <span className="w-[4px]" /><IconBtn n="key" label="Key" s="size-[6px]" /><span className="w-[2px]" />
          {["gear", "loop", "speaker", "balls"].map((n) => <IconBtn key={n} n={n} s="size-[6px]" />)}
        </div>
        <div className="flex h-[11px] items-start justify-end gap-px bg-[#171717] pr-[7px] font-['Lato','Noto_Sans_CJK_SC',sans-serif] text-[7px] font-black leading-[9px] text-white">
          <span>HOUDINI特效吧</span><a href="#tieba">【www.linecg.com/tieba/1746】</a>
        </div>
      </footer>
    </div>
  );
}
